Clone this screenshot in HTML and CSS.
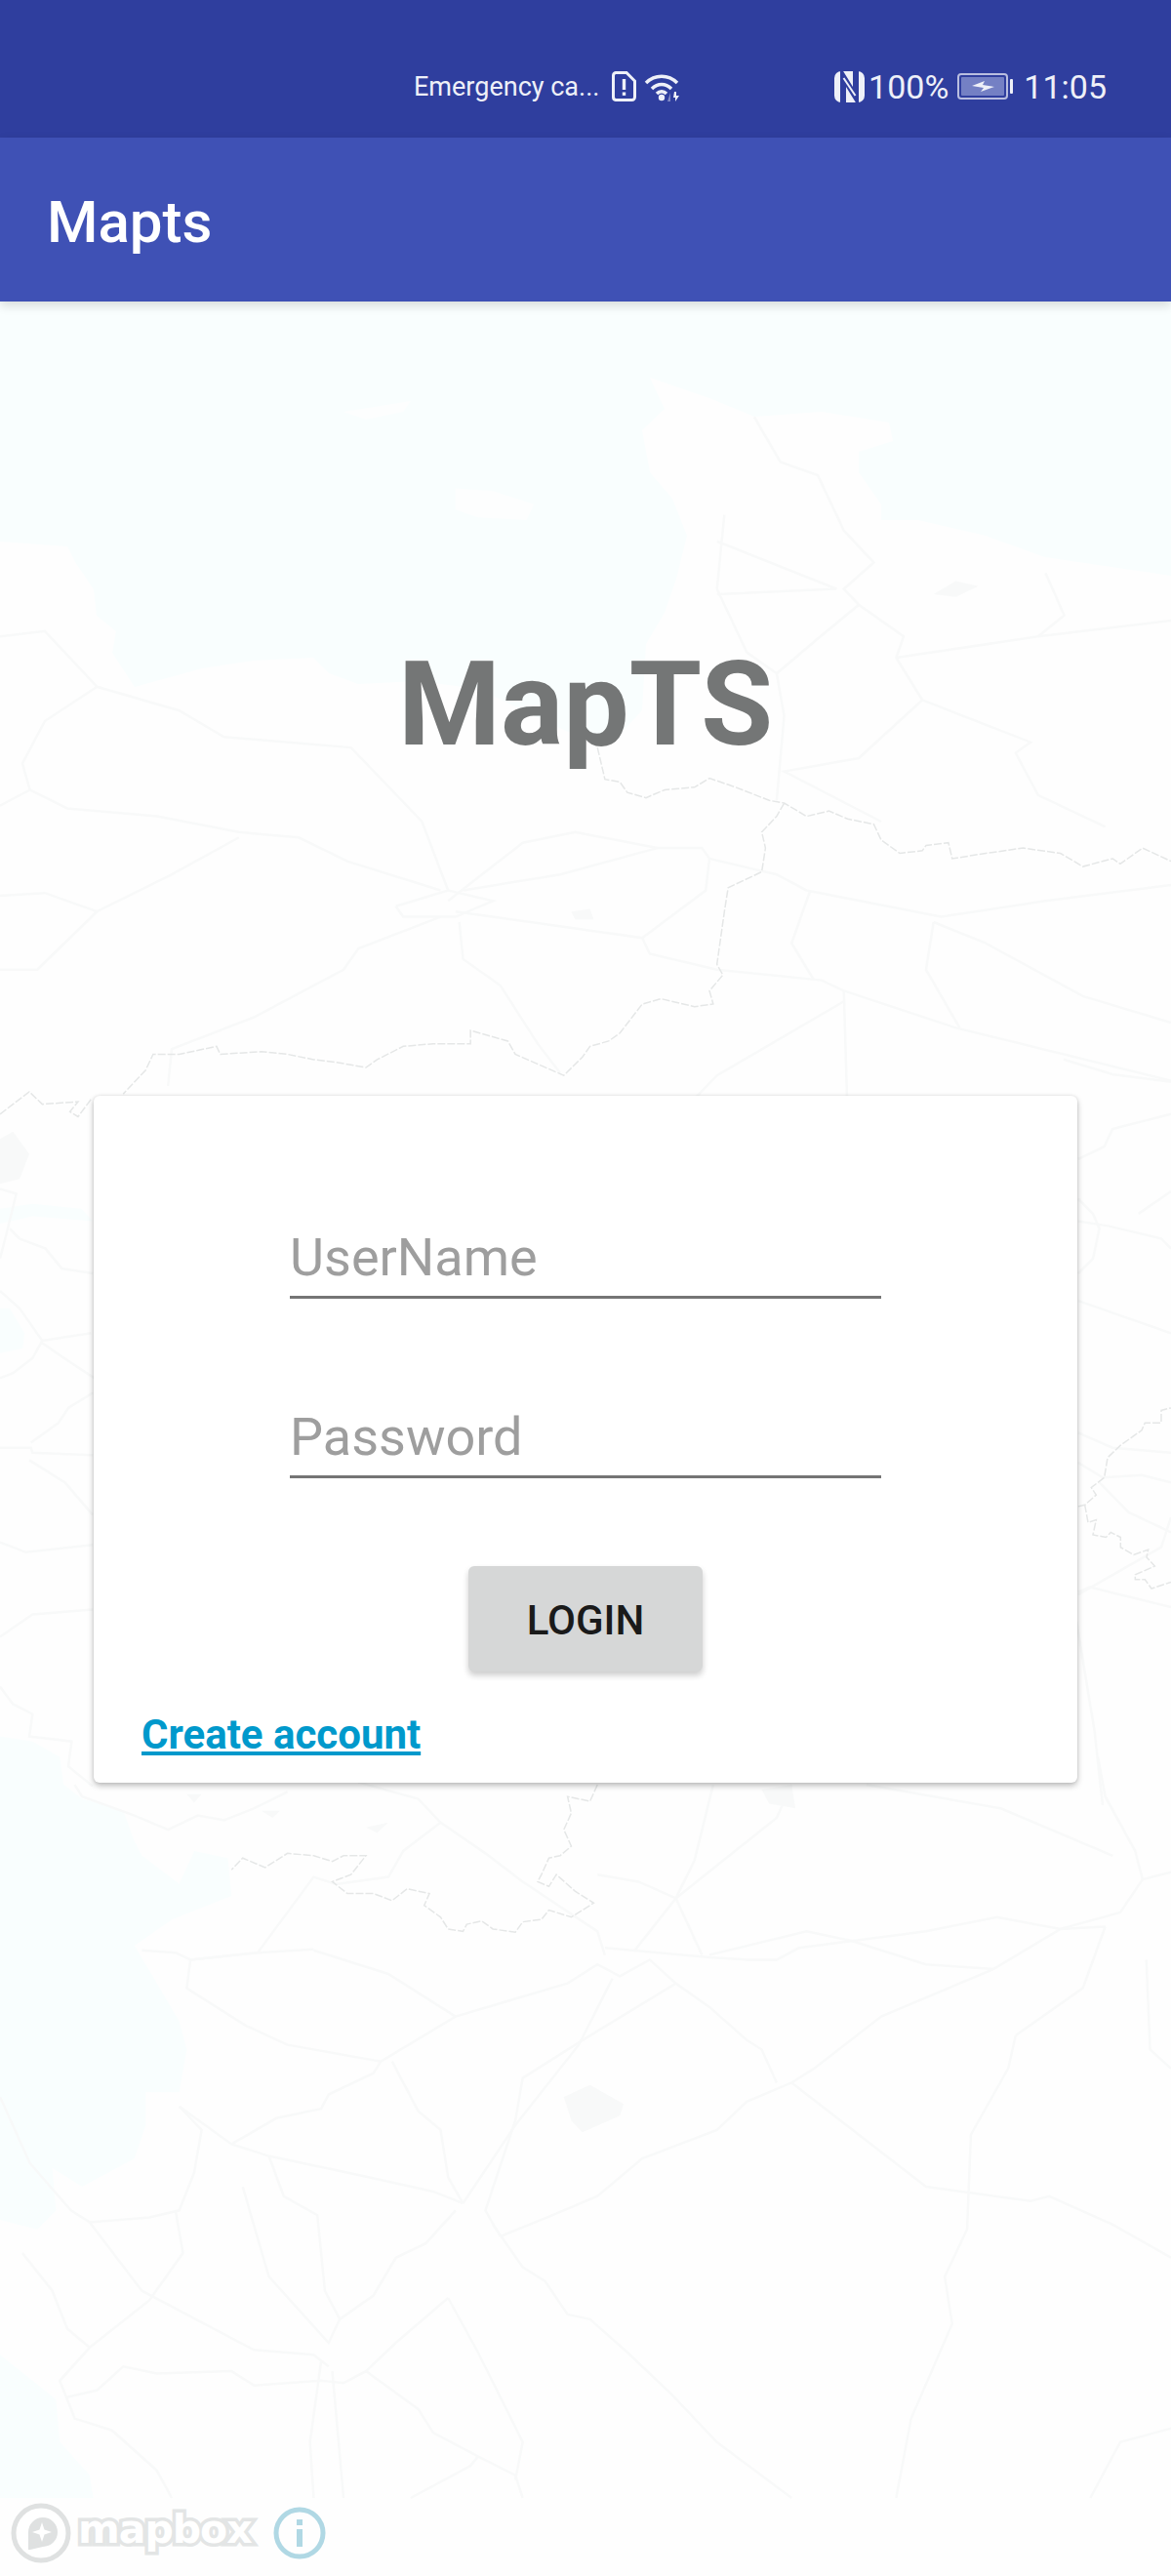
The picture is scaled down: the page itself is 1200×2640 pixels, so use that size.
FILE: index.html
```html
<!DOCTYPE html>
<html lang="en">

<head>
    <meta charset="UTF-8">
    <title>Mapts</title>
    <link rel="stylesheet" href="styles.css">
</head>

<body>
    <!-- map behind everything -->
    <svg class="map" viewBox="0 0 1200 2640">
        <path class="water" d="M0 309H1200V590L1071 571 1010 549 941 533 903 533 903 517 880 484 880 463 915 452 911 433 842 422 773 427 727 408 666 387 681 419 658 441 666 484 689 511 704 549 693 593 681 628 662 660 658 728 635 753 582 750 490 706 429 698 367 701 337 690 321 674 260 677 207 685 138 704 115 669 119 647 99 631 96 604 77 576 69 560 0 555Z" />

        <!-- top part, below the app bar -->
        <g transform="translate(0 300) scale(.7653 .542)">
            <path class="land" d="M460 225L550 205 540 225 490 240Z" />
            <path class="land" d="M610 370L660 375 715 400 705 430 640 425 610 410Z" />
            <path class="park" d="M1250 570L1280 545 1310 555 1280 575Z" />
            <path class="park" d="M765 1170L790 1165 795 1185 770 1185Z" />
            <g class="roads">
                <polyline points="1010,235 1045,320 1095,345 1130,450 1170,510 1130,560 1150,590 1210,650 1200,690 1235,770" />
                <polyline points="970,420 960,560 1000,680 1040,720 1050,800 1040,960" />
                <polyline points="960,470 1120,560 960,570" />
                <polyline points="1150,590 1090,660 1040,720" />
                <polyline points="1200,690 1390,650 1568,620" />
                <polyline points="1400,530 1425,610 1390,650" />
                <polyline points="1235,770 1380,850 1360,870 1390,950 1480,1010" />
                <polyline points="1235,770 1150,880 1050,905 1180,1000" />
                <polyline points="0,650 60,640 100,700 130,745 240,790 300,840 470,860 565,1000 600,1130" />
                <polyline points="130,745 60,810 30,890 40,940 0,970" />
                <polyline points="40,940 90,975 210,990 320,1020 400,1030 465,1075 590,1130" />
                <polyline points="320,1030 230,1100 130,1170 60,1135 0,1140" />
                <polyline points="130,1170 50,1280 0,1280" />
                <polyline points="600,1150 700,1040 770,1020 880,1050 940,1050 950,1070 1040,1100 1080,1130 1260,1180 1400,1150 1568,1120" />
                <polyline points="620,1130 750,1100 880,1050" />
                <polyline points="610,1170 860,1220 870,1250 960,1280 1100,1300 1130,1320 1280,1390 1568,1490" />
                <polyline points="590,1180 480,1240 460,1280 340,1370 230,1430 225,1500" />
                <polyline points="615,1190 620,1260 670,1310 720,1420 750,1475" />
                <polyline points="1130,1320 1135,1560" />
                <polyline points="1130,1340 960,1480 900,1568" />
                <polyline points="1250,1190 1240,1280 1285,1390" />
                <polyline points="1250,1190 1320,1230 1450,1330 1568,1380" />
                <polyline points="950,1070 945,1130 860,1220" />
                <polyline points="1090,1300 1060,1230 1085,1130" />
                <polyline points="530,1160 600,1130 660,1150 610,1180 540,1180 530,1160" />
            </g>
            <g class="border">
                <polyline points="800,860 810,920 830,925 840,945 865,955 890,940 930,935 950,918 985,935 1030,960 1050,965 1080,990 1110,980 1135,995 1170,1005 1180,1035 1205,1060 1235,1055 1240,1045 1270,1040 1275,1070 1320,1060 1370,1050 1420,1060 1450,1085 1490,1070 1500,1080 1530,1050 1568,1075" />
                <polyline points="1050,965 1040,990 1020,1020 1025,1050 1020,1095 975,1125 970,1170 965,1220 960,1270 968,1290 950,1320 955,1345 930,1350 885,1335 860,1345 830,1400 815,1415 790,1425 780,1445 755,1480 690,1440 680,1415 630,1395 630,1420 580,1420 540,1425 505,1450 490,1465 450,1455 420,1450 385,1440 350,1435 295,1440 290,1425 240,1440 205,1440 195,1470 165,1515" />
            </g>
        </g>

        <!-- left of the card -->
        <g transform="translate(0 1050) scale(.3333 .5102)">
            <path class="water" d="M0 570H30L75 620 70 650 0 660Z" />
            <path class="water" d="M0 370L100 360 250 370 285 395 100 385 0 400Z" />
            <path class="water" d="M0 1430L100 1440 180 1470 190 1530 240 1568H0Z" />
            <path class="park" d="M0 230L40 215 90 260 60 310 0 320Z" />
            <g class="roads">
                <polyline points="0,330 50,340 20,420 0,470" />
                <polyline points="30,410 60,430 140,450 190,490 285,500" />
                <polyline points="0,535 60,570 130,635 100,670 40,700 0,710" />
                <polyline points="130,635 280,620" />
                <polyline points="130,640 220,680 290,710" />
                <polyline points="0,850 95,850 100,860 285,865" />
                <polyline points="95,840 180,800 210,770 285,740" />
                <polyline points="90,875 200,920 285,985" />
                <polyline points="0,1040 80,1060 285,1045" />
                <polyline points="0,1230 100,1185 285,1175" />
                <polyline points="0,1330 40,1365 100,1385 90,1430 220,1440 210,1490 285,1530" />
            </g>
            <polyline class="border" points="0,180 90,135 130,160 240,155 215,175 240,185 280,150" />
        </g>

        <!-- right of the card -->
        <g transform="translate(1090 1050) scale(.3333 .5102)">
            <g class="roads">
                <polyline points="45,350 90,380 110,410 90,470 45,500" />
                <polyline points="45,395 140,405 300,430 330,450" />
                <polyline points="45,555 330,620" />
                <polyline points="45,270 125,245 150,210 330,180" />
                <polyline points="230,380 330,335" />
                <polyline points="45,820 150,850 330,860" />
                <polyline points="45,880 120,910 240,905 330,920" />
                <polyline points="110,920 200,980 330,1020" />
                <polyline points="45,1145 300,1050 330,990" />
                <polyline points="45,1140 80,1130 330,1170" />
                <polyline points="40,1200 95,1420 120,1568" />
                <polyline points="0,70 150,100 330,115" />
            </g>
            <g class="border">
                <polyline points="45,968 65,965 100,945 85,930 125,910 135,870 175,845 240,815 250,800 300,800 300,775 330,770" />
                <polyline points="65,965 75,1000 100,995 90,1025 130,1030 145,1020 175,1030 175,1050 215,1065 260,1055 255,1070 280,1088 220,1105 220,1115 250,1115 270,1133 330,1120" />
            </g>
        </g>

        <!-- below the card -->
        <g transform="translate(0 1800) scale(.7653 .4847)">
            <path class="water" d="M0 0H80L85 60 110 90 165 115 180 180 190 210 240 270 260 200 305 215 310 295 230 345 180 400 240 560 250 620 240 710 195 710 195 780 180 850 110 910 70 870 75 960 50 1000 0 980Z" />
            <path class="water" d="M0 1265L75 1360 80 1450 120 1520 125 1568H0Z" />
            <path class="park" d="M755 720L790 695 835 735 830 760 780 795 765 770Z" />
            <path class="park" d="M1020 70L1060 60 1065 110 1030 100Z" />
            <path class="park" d="M490 150L520 140 505 162Z" />
            <path class="park" d="M250 80H270L260 98Z" />
            <path class="park" d="M350 115H375L365 130Z" />
            <g class="roads">
                <polyline points="100,60 110,85 180,125 225,155 265,125 300,135 340,110 385,75" />
                <polyline points="480,55 560,90 590,140 650,205 700,265 800,370 810,420" />
                <polyline points="590,140 540,200 520,255 450,270 420,255 345,415 255,430 235,415 190,410" />
                <polyline points="255,430 250,490 330,570 385,610 510,645 610,550 760,480 800,440 830,465 870,430 905,480 950,530 1000,600 1020,620 1040,690" />
                <polyline points="420,410 520,460 610,550" />
                <polyline points="255,430 345,415 420,408" />
                <polyline points="810,405 950,425 1000,430 1040,430 1070,405 1240,370 1335,340 1420,365 1480,360" />
                <polyline points="950,420 1080,370 1140,390 1240,440 1330,450" />
                <polyline points="1330,450 1420,365 1500,330 1530,260 1568,245" />
                <polyline points="1330,450 1180,550 1090,660 1060,690" />
                <polyline points="905,300 850,410" />
                <polyline points="905,300 1040,130 1060,60" />
                <polyline points="905,300 940,420" />
                <polyline points="955,60 930,220 905,300" />
                <polyline points="800,250 855,265 905,300" />
                <polyline points="820,470 775,610 690,780 620,945" />
                <polyline points="905,480 780,600 700,680 690,770 650,960 670,1015" />
                <polyline points="1060,690 1000,730 960,790 860,850 800,930 740,970 670,1015" />
                <polyline points="1060,690 1240,910 1380,940 1405,930 1490,990 1568,1060" />
                <polyline points="1360,590 1350,660 1300,800 1295,1000 1265,1100 1275,1200 1220,1400 1200,1568" />
                <polyline points="1470,0 1480,85 1520,200 1530,260" />
                <polyline points="1160,60 1340,110 1490,210" />
                <polyline points="1480,360 1450,490 1360,590" />
                <polyline points="1535,430 1540,620 1568,660" />
                <polyline points="240,740 310,820 360,845 480,885 580,920 620,945" />
                <polyline points="510,645 500,670 440,715 430,745 370,765 310,820" />
                <polyline points="525,645 560,750 590,790 600,890 620,945" />
                <polyline points="240,740 270,790 260,880 240,960 200,975 120,985 95,960 40,860 0,720" />
                <polyline points="360,845 380,930 425,970 435,1130 455,1190 500,1140 530,1060 570,1030 610,960" />
                <polyline points="235,960 245,1050 200,1150 120,1250 80,1320 100,1400 150,1425 210,1510 230,1568" />
                <polyline points="120,985 190,1130 340,1255 420,1265 440,1290" />
                <polyline points="325,910 360,1100 440,1240 455,1190" />
                <polyline points="30,1050 70,1130 90,1210 120,1250" />
                <polyline points="600,1145 530,1240 490,1300 460,1325 430,1320 340,1330 310,1300 210,1305 165,1290 130,1340 90,1355" />
                <polyline points="660,990 700,1080 730,1110 760,1180 790,1190 840,1260 900,1350 960,1450 1060,1568" />
                <polyline points="600,1145 640,1260 700,1450 690,1530" />
                <polyline points="490,1300 560,1380 580,1430 640,1480 690,1520 700,1568" />
                <polyline points="430,1280 415,1450 420,1568" />
                <polyline points="445,1300 460,1568" />
                <polyline points="640,1480 630,1500 550,1568" />
                <polyline points="1570,1420 1500,1450 1460,1568" />
            </g>
            <polyline class="border" points="800,60 790,95 760,85 765,120 755,155 765,190 750,210 735,215 725,250 720,265 735,275 745,250 770,285 795,310 765,340 735,325 725,345 700,350 690,372 660,365 645,348 625,355 620,370 600,365 590,340 568,315 575,290 545,280 525,305 500,290 465,290 445,265 470,250 490,210 460,210 445,222 420,210 385,205 355,235 325,215 310,240" />
        </g>
    </svg>

    <div class="status-bar">
        <span class="carrier">Emergency ca...</span>
        <svg class="icon-sim" viewBox="0 0 25 31">
            <path d="M4 1.500H15L23.500 10V26.500A3 3 0 0 1 20.500 29.500H4A3 3 0 0 1 1.500 26.500V4.500A3 3 0 0 1 4 1.500Z" />
            <rect x="10.800" y="8" width="3.400" height="11" />
            <rect x="10.800" y="21.500" width="3.400" height="3.400" />
        </svg>
        <svg class="icon-wifi" viewBox="0 0 37 30">
            <path class="arc" d="M2 11C11 2 25 2 34 11" />
            <path class="arc" d="M8 17C14 11 22 11 28 17" />
            <path class="arc" d="M13 22C16 19 20 19 23 22" />
            <circle cx="18" cy="26" r="3.200" />
            <path class="faint" d="M27 21L27 30 24 30Z" />
            <path d="M31 20H33V24H36L32 30V26H30Z" />
        </svg>
        <span class="spacer"></span>
        <svg class="icon-nfc" viewBox="0 0 31 32">
            <rect width="31" height="32" rx="7" />
            <path class="n-cut" d="M9 32V5.500L22 26.500V0" />
            <path class="n-core" d="M9.500 7L21.500 25" />
        </svg>
        <span class="percent">100%</span>
        <svg class="icon-battery" viewBox="0 0 57 27">
            <rect class="shell" x="1" y="1" width="50" height="25" rx="3" />
            <rect class="charge" x="4" y="4" width="44" height="19" rx="1" />
            <path d="M15 13L28 8 26 12 38 14 24 19 27 15Z" />
            <rect x="54" y="6" width="3" height="15" rx="1" />
        </svg>
        <span class="clock">11:05</span>
    </div>

    <header class="app-bar">Mapts</header>

    <main class="content">
        <h1 class="app-name">MapTS</h1>
        <form class="login-card">
            <input class="field" type="text" placeholder="UserName">
            <input class="field field-password" type="password" placeholder="Password">
            <button class="btn-login" type="button">LOGIN</button>
            <a class="create-link" href="#">Create account</a>
        </form>
    </main>

    <!-- mapbox attribution -->
    <div class="attribution">
        <svg class="mapbox-mark" viewBox="0 0 62 62">
            <circle class="ring" cx="31" cy="31" r="28" />
            <path class="pin" d="M18 48V30A15 15 0 1 1 33 45L20 48Z" />
            <path class="star" d="M32 20L34.500 27.500 42 30 34.500 32.500 32 40 29.500 32.500 22 30 29.500 27.500Z" />
        </svg>
        <span class="mapbox-word">mapbox</span>
        <svg class="info-mark" viewBox="0 0 54 54">
            <circle cx="27" cy="27" r="24" />
            <rect x="24" y="13" width="6" height="6" />
            <rect x="24" y="23" width="6" height="18" />
        </svg>
    </div>
</body>

</html>
```

FILE: styles.css
```css
html,body{margin:0;padding:0;}
body{
    position:relative;
    display:flex;
    flex-direction:column;
    width:1200px;
    height:2640px;
    overflow:hidden;
    background:#fefefe;
    font-family:Roboto,"Liberation Sans",sans-serif;
}

/* map */
.map{position:absolute;top:0;left:0;width:1200px;height:2640px;}
.map .water{fill:#f9fefe;}
.map .land{fill:#fdfefe;}
.map .park{fill:#f8f9f9;}
.map polyline{fill:none;vector-effect:non-scaling-stroke;}
.map .roads polyline{stroke:#f8f9f9;stroke-width:2.5;}
.map .border polyline,.map polyline.border{stroke:#e5e7e7;stroke-width:1.5;stroke-dasharray:8 2;}

/* status bar */
.status-bar{
    position:relative;
    display:flex;
    align-items:center;
    height:141px;
    padding:36px 66px 0 424px;
    box-sizing:border-box;
    background:#2f3e9e;
    color:#eef0f8;
    font-size:34px;
}
.status-bar svg{fill:#eef0f8;flex:none;}
.carrier{width:203px;font-size:27px;white-space:nowrap;}
.icon-sim{width:25px;height:31px;}
.icon-sim path{fill:none;stroke:#eef0f8;stroke-width:3;}
.icon-wifi{width:37px;height:30px;margin-left:8px;}
.icon-wifi .arc{fill:none;stroke:#eef0f8;stroke-width:3.500;}
.icon-wifi .faint{fill:#8088c4;}
.spacer{flex:1;}
.icon-nfc{width:31px;height:32px;}
.icon-nfc .n-cut{fill:none;stroke:#2f3e9e;stroke-width:6;}
.icon-nfc .n-core{fill:none;stroke:#eef0f8;stroke-width:2;}
.percent{margin-left:4px;}
.icon-battery{width:57px;height:27px;margin-left:9px;}
.icon-battery .shell{fill:none;stroke:#b9bee0;stroke-width:2;}
.icon-battery .charge{fill:#7480c4;}
.clock{margin-left:11px;}

/* app bar */
.app-bar{
    position:relative;
    height:168px;
    padding-left:48px;
    background:#3f51b5;
    color:#fff;
    font-size:60px;
    font-weight:500;
    line-height:173px;
    box-shadow:0 4px 10px rgba(0,0,0,.14);
}

/* login */
.content{position:relative;display:flex;flex-direction:column;align-items:center;}
.app-name{
    margin:343px 0 331px;
    color:#747676;
    font-size:120px;
    font-weight:700;
    line-height:140px;
}
.login-card{
    display:flex;
    flex-direction:column;
    align-items:center;
    box-sizing:border-box;
    width:1008px;
    height:704px;
    padding-top:134px;
    border-radius:6px;
    background:#fff;
    box-shadow:0 3px 6px rgba(0,0,0,.26),0 0 3px rgba(0,0,0,.1);
}
.field{
    box-sizing:border-box;
    width:606px;
    height:74px;
    padding:0 0 8px;
    border:0;
    border-bottom:3px solid #757575;
    border-radius:0;
    outline:0;
    background:none;
    font-family:inherit;
    font-size:54px;
    line-height:63px;
}
.field::placeholder{color:#9e9e9e;opacity:1;}
.field-password{margin-top:110px;}
.btn-login{
    width:240px;
    height:108px;
    margin-top:90px;
    padding:2px 0 0;
    border:0;
    border-radius:6px;
    background:#d6d7d7;
    color:#1a1a1a;
    font-family:inherit;
    font-size:42px;
    font-weight:500;
    box-shadow:0 4px 6px rgba(0,0,0,.2);
}
.create-link{
    align-self:flex-start;
    margin:40px 0 0 49px;
    color:#0099cc;
    font-size:42px;
    font-weight:700;
}

/* attribution sits over the map */
.attribution{
    position:absolute;
    left:11px;
    bottom:13px;
    display:flex;
    align-items:center;
    height:62px;
}
.mapbox-mark{width:62px;height:62px;}
.mapbox-mark .ring{fill:#fff;stroke:#dfe1e1;stroke-width:5;}
.mapbox-mark .pin{fill:#dfe1e1;}
.mapbox-mark .star{fill:#fff;}
.mapbox-word{
    margin:-8px 0 0 7px;
    width:198px;
    color:#fff;
    font-family:"DejaVu Sans",sans-serif;
    font-size:41px;
    font-weight:700;
    letter-spacing:-1px;
    -webkit-text-stroke:7px #e3e5e5;
    paint-order:stroke fill;
}
.info-mark{width:54px;height:54px;margin-left:2px;}
.info-mark circle{fill:none;stroke:#b0d8e4;stroke-width:5;}
.info-mark rect{fill:#b0d8e4;}
```
